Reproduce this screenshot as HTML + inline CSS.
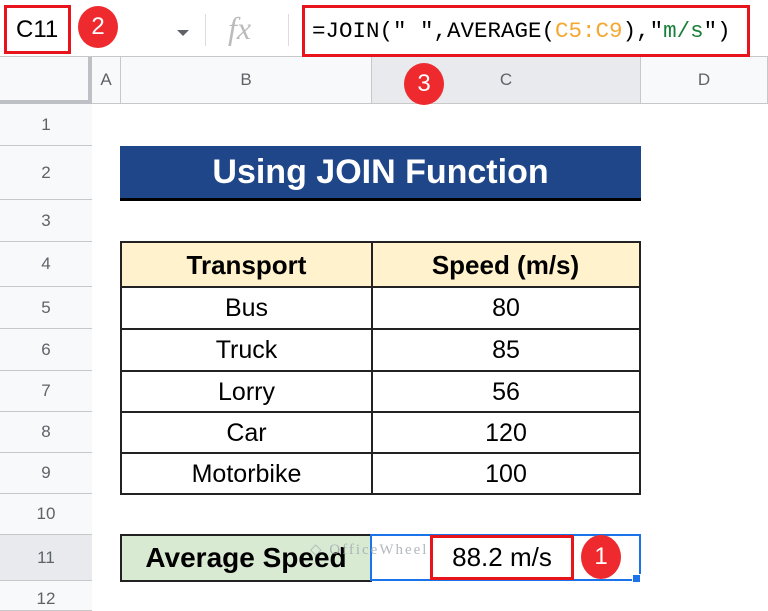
<!DOCTYPE html>
<html><head><style>
*{margin:0;padding:0;box-sizing:border-box}
body{width:768px;height:595px;overflow:hidden;background:#fff;font-family:"Liberation Sans",Arial,sans-serif;position:relative}
.a{position:absolute}
.rn{position:absolute;left:0;width:92px;text-align:center;color:#5f6368;font-size:17px;border-bottom:1px solid #c8c8c8;background:#f8f9fa;display:flex;align-items:center;justify-content:center}
.ch{position:absolute;top:57px;height:47px;color:#5f6368;font-size:17px;display:flex;align-items:center;justify-content:center;border-right:1px solid #c8c8c8;background:#f8f9fa;border-bottom:1px solid #c8c8c8}
.cell{position:absolute;display:flex;align-items:center;justify-content:center;font-size:25px;color:#000}
.circ{position:absolute;width:40px;height:42px;border-radius:50%;background:#ee2a2e;color:#fff;font-size:24px;display:flex;align-items:center;justify-content:center}
</style></head><body>
<div class="a" style="left:0;top:0;width:768px;height:57px;background:#fff;border-bottom:1px solid #c8c8c8"></div>
<div class="a" style="left:4px;top:5px;width:67px;height:49px;border:3px solid #e8141c;display:flex;align-items:center;padding-left:9px;font-size:24px;color:#000">C11</div>
<div class="circ" style="left:78px;top:6px">2</div>
<div class="a" style="left:177px;top:30px;width:0;height:0;border-left:6px solid transparent;border-right:6px solid transparent;border-top:6px solid #5f6368"></div>
<div class="a" style="left:205px;top:14px;width:1px;height:32px;background:#ddd"></div>
<div class="a" style="left:228px;top:10px;font-family:'Liberation Serif',serif;font-style:italic;font-size:32px;color:#bbb">fx</div>
<div class="a" style="left:288px;top:14px;width:1px;height:32px;background:#ddd"></div>
<div class="a" style="left:302px;top:5px;width:448px;height:52px;border:3px solid #e8141c;display:flex;align-items:center;padding-left:7px;font-family:'Liberation Mono',monospace;font-size:22.5px;color:#000;letter-spacing:0px;white-space:nowrap">=JOIN("&nbsp;",AVERAGE(<span style="color:#f4a832">C5:C9</span>),"<span style="color:#188038">m/s</span>")</div>
<div class="a" style="left:0;top:57px;width:92px;height:47px;background:#f8f9fa;border-right:4px solid #bdc1c6;border-bottom:4px solid #bdc1c6"></div>
<div class="ch" style="left:92px;width:29px">A</div>
<div class="ch" style="left:121px;width:251px">B</div>
<div class="ch" style="left:372px;width:269px;background:#e8eaed">C</div>
<div class="ch" style="left:641px;width:127px">D</div>
<div class="circ" style="left:404px;top:63px">3</div>
<div class="a" style="left:0;top:104px;width:92px;height:491px;background:#f8f9fa;border-right:1px solid #c8c8c8"></div>
<div class="rn" style="top:104px;height:42px">1</div>
<div class="rn" style="top:146px;height:54px">2</div>
<div class="rn" style="top:200px;height:42px">3</div>
<div class="rn" style="top:242px;height:45px">4</div>
<div class="rn" style="top:287px;height:42px">5</div>
<div class="rn" style="top:329px;height:42px">6</div>
<div class="rn" style="top:371px;height:41px">7</div>
<div class="rn" style="top:412px;height:41px">8</div>
<div class="rn" style="top:453px;height:41px">9</div>
<div class="rn" style="top:494px;height:41px">10</div>
<div class="rn" style="top:535px;height:46px;background:#e8eaed">11</div>
<div class="rn" style="top:581px;height:30px;align-items:flex-start;padding-top:8px">12</div>
<div class="cell" style="left:120px;top:146px;width:521px;height:55px;background:#1f4688;border-bottom:3px solid #000;color:#fff;font-weight:bold;font-size:34px">Using JOIN Function</div>
<div class="a" style="left:120px;top:241px;width:521px;height:254px;border:2px solid #222"></div>
<div class="cell" style="left:122px;top:243px;width:249px;height:44px;background:#fff2cc;font-weight:bold;font-size:26px">Transport</div>
<div class="cell" style="left:372px;top:243px;width:267px;height:44px;background:#fff2cc;font-weight:bold;font-size:26px">Speed (m/s)</div>
<div class="a" style="left:371px;top:241px;width:2px;height:254px;background:#222"></div>
<div class="a" style="left:120px;top:286px;width:521px;height:2px;background:#222"></div>
<div class="a" style="left:120px;top:328px;width:521px;height:2px;background:#222"></div>
<div class="a" style="left:120px;top:370px;width:521px;height:2px;background:#222"></div>
<div class="a" style="left:120px;top:411px;width:521px;height:2px;background:#222"></div>
<div class="a" style="left:120px;top:452px;width:521px;height:2px;background:#222"></div>
<div class="cell" style="left:122px;top:288px;width:249px;height:41px">Bus</div>
<div class="cell" style="left:373px;top:288px;width:266px;height:41px">80</div>
<div class="cell" style="left:122px;top:330px;width:249px;height:41px">Truck</div>
<div class="cell" style="left:373px;top:330px;width:266px;height:41px">85</div>
<div class="cell" style="left:122px;top:372px;width:249px;height:40px">Lorry</div>
<div class="cell" style="left:373px;top:372px;width:266px;height:40px">56</div>
<div class="cell" style="left:122px;top:413px;width:249px;height:40px">Car</div>
<div class="cell" style="left:373px;top:413px;width:266px;height:40px">120</div>
<div class="cell" style="left:122px;top:454px;width:249px;height:40px">Motorbike</div>
<div class="cell" style="left:373px;top:454px;width:266px;height:40px">100</div>
<div class="cell" style="left:120px;top:534px;width:252px;height:48px;background:#d9ead3;border:2px solid #222;font-weight:bold;font-size:28px">Average Speed</div>
<div class="a" style="left:370px;top:534px;width:271px;height:47px;border:2px solid #1a73e8"></div>
<div class="a" style="left:310px;top:540px;font-family:'Liberation Serif',serif;font-size:15px;color:#a0a8b0;letter-spacing:2px;opacity:.8">◇ OfficeWheel</div>
<div class="cell" style="left:430px;top:535px;width:144px;height:45px;border:3px solid #e8141c;font-size:26px">88.2 m/s</div>
<div class="circ" style="left:581px;top:535px;height:44px">1</div>
<div class="a" style="left:632px;top:574px;width:9px;height:9px;background:#1a73e8;border:1px solid #fff"></div>
</body></html>
